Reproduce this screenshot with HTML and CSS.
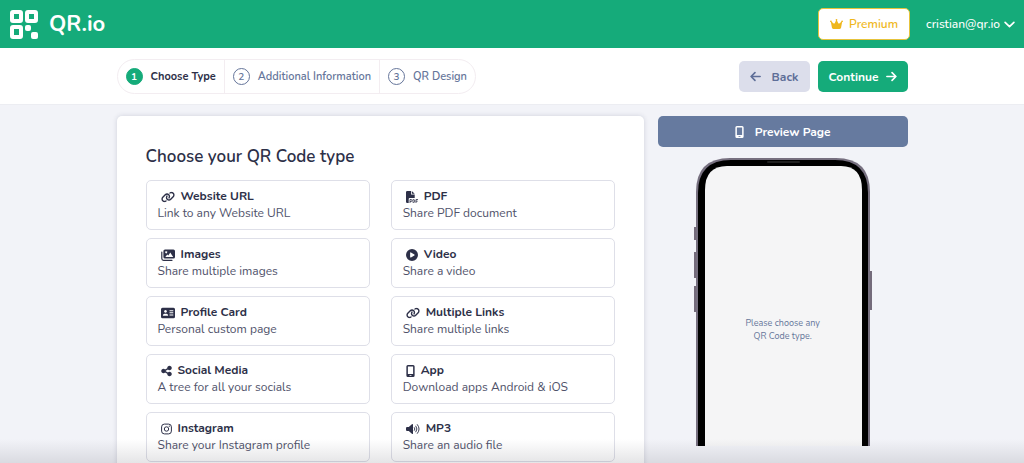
FILE: index.html
```
<!DOCTYPE html>
<html lang="en">
<head>
<meta charset="utf-8">
<meta name="viewport" content="width=device-width, initial-scale=1">
<title>QR.io – Choose Type</title>
<link rel="stylesheet" href="styles.css">
</head>
<body>
<svg class="defs" aria-hidden="true">
  <symbol id="link" viewBox="0 0 640 512"><path d="M579.8 267.7c56.5-56.5 56.5-148 0-204.5c-50-50-128.8-56.5-186.3-15.4l-1.6 1.1c-14.4 10.3-17.7 30.3-7.4 44.6s30.3 17.7 44.6 7.4l1.6-1.1c32.1-22.9 76-19.3 103.8 8.6c31.5 31.5 31.5 82.5 0 114L422.3 334.8c-31.5 31.5-82.5 31.5-114 0c-27.9-27.9-31.5-71.8-8.6-103.8l1.1-1.6c10.3-14.4 6.9-34.4-7.4-44.6s-34.4-6.9-44.6 7.4l-1.1 1.6C206.5 251.2 213 330 263 380c56.5 56.5 148 56.5 204.5 0L579.8 267.7zM60.2 244.3c-56.5 56.5-56.5 148 0 204.5c50 50 128.8 56.5 186.3 15.4l1.6-1.1c14.4-10.3 17.7-30.3 7.4-44.6s-30.3-17.7-44.6-7.4l-1.6 1.1c-32.1 22.9-76 19.3-103.8-8.6C74 372 74 321 105.5 289.5L217.7 177.2c31.5-31.5 82.5-31.5 114 0c27.9 27.9 31.5 71.8 8.6 103.9l-1.1 1.6c-10.3 14.4-6.9 34.4 7.4 44.6s34.4 6.9 44.6-7.4l1.1-1.6C433.5 260.8 427 182 377 132c-56.5-56.5-148-56.5-204.5 0L60.2 244.3z"/></symbol>
  <symbol id="mobile" viewBox="0 0 384 512"><path fill-rule="evenodd" d="M80 0H304a64 64 0 0 1 64 64V448a64 64 0 0 1-64 64H80a64 64 0 0 1-64-64V64A64 64 0 0 1 80 0zM80 64V384H304V64zM160 432a16 16 0 0 0 0 32h64a16 16 0 0 0 0-32z"/></symbol>
</svg>
<div class="app">
  <header class="topbar">
    <a class="brand" href="#">
      <svg class="brand-mark" viewBox="0 0 28 29" aria-hidden="true"><g fill="none" stroke="#fff" stroke-width="4"><rect x="2" y="2" width="9" height="9" rx="1"/><rect x="17" y="2" width="9" height="9" rx="1"/><rect x="2" y="17" width="9" height="10" rx="1"/></g><g fill="#fff"><rect x="15" y="15" width="6" height="6" rx="2"/><rect x="21" y="22" width="7" height="7" rx="2"/></g></svg>
      <span>QR.io</span>
    </a>
    <div class="account">
      <button class="premium" type="button">
        <svg class="crown" viewBox="0 0 576 512" aria-hidden="true"><path d="M309 106c11.4-7 19-19.7 19-34c0-22.1-17.9-40-40-40s-40 17.9-40 40c0 14.4 7.6 27 19 34L209.7 220.6c-9.1 18.2-32.7 23.4-48.6 10.7L72 160c5-6.7 8-15 8-24c0-22.1-17.9-40-40-40S0 113.9 0 136s17.9 40 40 40c.2 0 .5 0 .7 0L86.4 427.4c5.5 30.4 32 52.6 63 52.6H426.6c30.9 0 57.4-22.1 63-52.6L535.3 176c.2 0 .5 0 .7 0c22.1 0 40-17.9 40-40s-17.9-40-40-40s-40 17.9-40 40c0 9 3 17.3 8 24l-89.1 71.3c-15.9 12.7-39.5 7.5-48.6-10.7L309 106z"/></svg>
        Premium
      </button>
      <button class="user" type="button">cristian@qr.io
        <svg class="chevron" viewBox="0 0 10 6" aria-hidden="true"><path d="M1 1l4 4 4-4"/></svg>
      </button>
    </div>
  </header>
  <nav class="stepbar" aria-label="Progress">
    <div class="container stepbar-inner">
      <ol class="steps">
        <li class="step current" aria-current="step"><span class="num">1</span>Choose Type</li>
        <li class="step"><span class="num">2</span>Additional Information</li>
        <li class="step"><span class="num">3</span>QR Design</li>
      </ol>
      <div class="actions">
        <button class="btn back" type="button"><svg class="arrow" viewBox="0 0 10 10" aria-hidden="true"><path d="M9.200 5H1M4.500 1.500L1 5l3.500 3.500"/></svg>Back</button>
        <button class="btn next" type="button">Continue<svg class="arrow" viewBox="0 0 10 10" aria-hidden="true"><path d="M.8 5H9M5.500 1.500L9 5 5.500 8.500"/></svg></button>
      </div>
    </div>
  </nav>
  <main class="main">
    <div class="container columns">
      <section class="card">
        <h1>Choose your QR Code type</h1>
        <div class="types">
          <button class="type" type="button"><span class="name"><svg class="wide" viewBox="0 0 640 512"><use href="#link"/></svg>Website URL</span><span class="desc">Link to any Website URL</span></button>
          <button class="type" type="button"><span class="name"><svg viewBox="0 0 12 12"><path d="M0 1.200Q0 0 1.200 0H5V3.500H8.700V7H3.700Q2.700 7 2.700 8V12H1.200Q0 12 0 10.800zM5.800 0L8.700 2.800H5.800z"/><path fill="none" stroke="currentColor" stroke-width=".8" d="M4 12V8.500H5Q6 8.500 6 9.500T5 10.500H4M7 8.500V11.600H7.600Q8.800 11.500 8.800 10T7.600 8.500zM10 12V8.500H12M10 10.200H11.700"/></svg>PDF</span><span class="desc">Share PDF document</span></button>
          <button class="type" type="button"><span class="name"><svg class="wide" viewBox="0 0 14 12"><path fill="none" stroke="currentColor" stroke-width="1.200" stroke-linecap="round" d="M.8 3V9.500Q.8 11.300 2.600 11.300H11"/><path fill-rule="evenodd" d="M4 .5H12.400Q14 .5 14 2V8Q14 9.600 12.400 9.600H4Q2.400 9.600 2.400 8V2Q2.400 .5 4 .5zM4.300 8.100H12.200L9.300 3.600 7.300 6.500 6.300 5.500zM5.200 2.200a1 1 0 1 0 .01 0z"/></svg>Images</span><span class="desc">Share multiple images</span></button>
          <button class="type" type="button"><span class="name"><svg viewBox="0 0 512 512"><path d="M0 256a256 256 0 1 1 512 0A256 256 0 1 1 0 256zM188.300 147.100c-7.600 4.200-12.300 12.300-12.300 20.900V344c0 8.700 4.700 16.700 12.300 20.900s16.800 4.100 24.300-.5l144-88c7.100-4.400 11.500-12.100 11.500-20.500s-4.400-16.100-11.500-20.500l-144-88c-7.400-4.500-16.700-4.700-24.300-.5z"/></svg>Video</span><span class="desc">Share a video</span></button>
          <button class="type" type="button"><span class="name"><svg class="wide" viewBox="0 0 14 12"><path fill-rule="evenodd" d="M1.500 .8H12.500Q14 .8 14 2.300V9.700Q14 11.200 12.500 11.200H1.500Q0 11.200 0 9.700V2.300Q0 .8 1.500 .8zM4.500 3a1.400 1.400 0 1 0 .01 0zM1.800 8.800H7.200Q7 6.700 5.500 6.700H3.500Q2 6.700 1.800 8.800zM8.500 3.200V4.200H12.300V3.200zM8.500 5.300V6.300H12.300V5.300zM8.500 7.400V8.400H12.300V7.400z"/></svg>Profile Card</span><span class="desc">Personal custom page</span></button>
          <button class="type" type="button"><span class="name"><svg class="wide" viewBox="0 0 640 512"><use href="#link"/></svg>Multiple Links</span><span class="desc">Share multiple links</span></button>
          <button class="type" type="button"><span class="name"><svg class="slim" viewBox="0 0 448 512"><path d="M352 224c53 0 96-43 96-96s-43-96-96-96s-96 43-96 96c0 4 .2 8 .7 11.900l-94.100 47C145.400 170.200 121.900 160 96 160c-53 0-96 43-96 96s43 96 96 96c25.900 0 49.400-10.200 66.600-26.900l94.100 47c-.5 3.900-.7 7.800-.7 11.900c0 53 43 96 96 96s96-43 96-96s-43-96-96-96c-25.900 0-49.400 10.200-66.600 26.900l-94.100-47c.5-3.900 .7-7.800 .7-11.900s-.2-8-.7-11.900l94.100-47C302.600 213.800 326.100 224 352 224z"/></svg>Social Media</span><span class="desc">A tree for all your socials</span></button>
          <button class="type" type="button"><span class="name"><svg class="phone-icon" viewBox="0 0 384 512"><use href="#mobile"/></svg>App</span><span class="desc">Download apps Android &amp; iOS</span></button>
          <button class="type" type="button"><span class="name"><svg class="slim" viewBox="0 0 11 12"><g fill="none" stroke="currentColor"><rect x=".6" y="1.100" width="9.800" height="9.800" rx="2.800"/><circle cx="5.500" cy="6" r="2.200"/></g><circle cx="8.300" cy="3.200" r=".6"/></svg>Instagram</span><span class="desc">Share your Instagram profile</span></button>
          <button class="type" type="button"><span class="name"><svg class="wide" viewBox="0 0 15 12"><path d="M1.200 3.800H3L6.300 .9Q7.300 .3 7.500 1.300V10.700Q7.300 11.700 6.300 11.100L3 8.200H1.200Q0 8.200 0 7V5Q0 3.800 1.200 3.800z"/><path fill="none" stroke="currentColor" stroke-linecap="round" d="M9 4.500Q10.200 6 9 7.500M10.600 2.900Q13.100 6 10.600 9.100M12.200 1.300Q16 6 12.200 10.700"/></svg>MP3</span><span class="desc">Share an audio file</span></button>
        </div>
      </section>
      <aside class="preview">
        <button class="btn preview-btn" type="button"><svg class="phone-icon" viewBox="0 0 384 512" aria-hidden="true"><use href="#mobile"/></svg>Preview Page</button>
        <div class="phone">
          <svg class="phone-shell" viewBox="0 0 178 288" aria-hidden="true">
            <path fill="#746b7b" d="M0 69h3v13H0zM0 94h3v26H0zM0 128h3v26H0zM175 113h3v39h-3z"/>
            <path fill="#777080" d="M2 288V34Q2 0 36 0H142Q176 0 176 34V288z"/>
            <path fill="#000" d="M4 288V35Q4 2 37 2H141Q174 2 174 35V288z"/>
            <path fill="#f5f5f6" d="M11 288V32Q11 8 33 8H147Q168 8 168 32V288z"/>
            <rect x="73" y="3" width="33" height="2" rx="1" fill="#202020"/>
          </svg>
          <p class="phone-text">Please choose any<br>QR Code type.</p>
        </div>
      </aside>
    </div>
  </main>
  <div class="fade"></div>
</div>
</body>
</html>
```
FILE: styles.css
```
* { box-sizing: border-box; }
body {
  margin: 0;
  font-family: Nunito, "Open Sans", "Noto Sans", sans-serif;
  font-size: 12px;
  color: #2d3048;
  background: #f2f3f8;
}
button { font: inherit; color: inherit; cursor: pointer; }
svg { display: block; flex: none; fill: currentColor; }
.defs { display: none; }
.app { position: relative; display: flex; flex-direction: column; height: 100vh; overflow: hidden; }
.container { width: 100%; max-width: 791px; margin: 0 auto; }

.topbar {
  display: flex;
  flex: none;
  align-items: center;
  justify-content: space-between;
  height: 48px;
  padding: 0 9px 0 10px;
  background: #15ab7a;
  color: #fff;
}
.brand { display: flex; align-items: center; gap: 11px; color: #fff; font-size: 22px; font-weight: 700; text-decoration: none; }
.brand-mark { width: 28px; height: 29px; }
.account { display: flex; align-items: center; gap: 16px; }
.premium {
  display: flex;
  align-items: center;
  justify-content: center;
  gap: 6px;
  width: 92px;
  height: 32px;
  padding: 0;
  border: 1px solid #e6c33c;
  border-radius: 5px;
  background: #fff;
  color: #efb71d;
  font-size: 12px;
  font-weight: 600;
}
.crown { width: 13px; height: 12px; }
.user { display: flex; align-items: center; gap: 4px; padding: 0; border: 0; background: none; font-size: 12px; font-weight: 500; }
.chevron { width: 11px; height: 7px; fill: none; stroke: currentColor; stroke-width: 1.500; stroke-linecap: round; stroke-linejoin: round; }

.stepbar { flex: none; padding: 11px 0 10px; background: #fff; border-bottom: 1px solid #ecedf2; }
.stepbar-inner { display: flex; align-items: center; justify-content: space-between; }
.steps { display: flex; margin: 0; padding: 0; list-style: none; border: 1px solid #f3edf1; border-radius: 18px; }
.step { display: flex; align-items: center; gap: 8px; height: 33px; padding: 0 8px; color: #65759a; font-size: 11px; font-weight: 600; }
.step + .step { border-left: 1px solid #f3edf1; }
.num { display: grid; place-items: center; width: 17px; height: 17px; border: 1px solid #65759a; border-radius: 50%; font-size: 10px; line-height: 1; }
.current { color: #2d3048; font-weight: 700; }
.current .num { border-color: #15ab7a; background: #15ab7a; color: #fff; }
.actions { display: flex; gap: 8px; }
.btn { display: flex; align-items: center; justify-content: center; height: 31px; border: 0; border-radius: 5px; font-size: 12px; font-weight: 700; }
.arrow { width: 11px; height: 11px; fill: none; stroke: currentColor; stroke-width: 1.500; stroke-linecap: round; stroke-linejoin: round; }
.back { gap: 11px; padding: 0 11px; background: #dcdeeb; color: #5e6e98; }
.next { gap: 7px; padding: 0 11px; background: #15ab7a; color: #fff; }

.main { flex: 1; min-height: 0; padding: 11px 0 0; }
.columns { display: grid; grid-template-columns: minmax(0, 528fr) minmax(0, 250fr); gap: 14px; align-items: start; }
.card { padding: 29px; background: #fff; border-radius: 5px; box-shadow: 0 0 5px rgba(50, 55, 90, 0.18); }
h1 { margin: 0 0 12px; font-size: 17px; line-height: 23px; font-weight: 600; }
.types { display: grid; grid-template-columns: 1fr 1fr; gap: 8px 21px; }
.type { display: flex; flex-direction: column; align-items: flex-start; justify-content: center; height: 50px; padding: 0 11px; border: 1px solid #dedfe8; border-radius: 5px; background: #fff; text-align: left; }
.name { display: flex; align-items: center; gap: 6px; padding-left: 3px; font-size: 12px; line-height: 17px; font-weight: 700; }
.name svg { width: 12px; height: 12px; }
.name .wide { width: 14px; }
.name .slim { width: 11px; }
.name .phone-icon, .preview-btn .phone-icon { width: 9px; height: 12px; }
.desc { font-size: 12px; line-height: 17px; color: #50526a; }

.preview { display: flex; flex-direction: column; gap: 11px; }
.preview-btn { gap: 11px; width: 100%; background: #667a9f; color: #fff; }
.phone { display: grid; justify-content: center; place-items: center; }
.phone-shell, .phone-text { grid-area: 1 / 1; }
.phone-shell { width: 178px; height: 288px; }
.phone-text { margin: 0; padding-top: 56px; font-size: 9px; line-height: 13px; text-align: center; color: #65759a; }

.fade { position: absolute; inset: auto 0 0; height: 24px; background: linear-gradient(rgba(40, 40, 55, 0), rgba(40, 40, 55, 0.12)); pointer-events: none; }
```
